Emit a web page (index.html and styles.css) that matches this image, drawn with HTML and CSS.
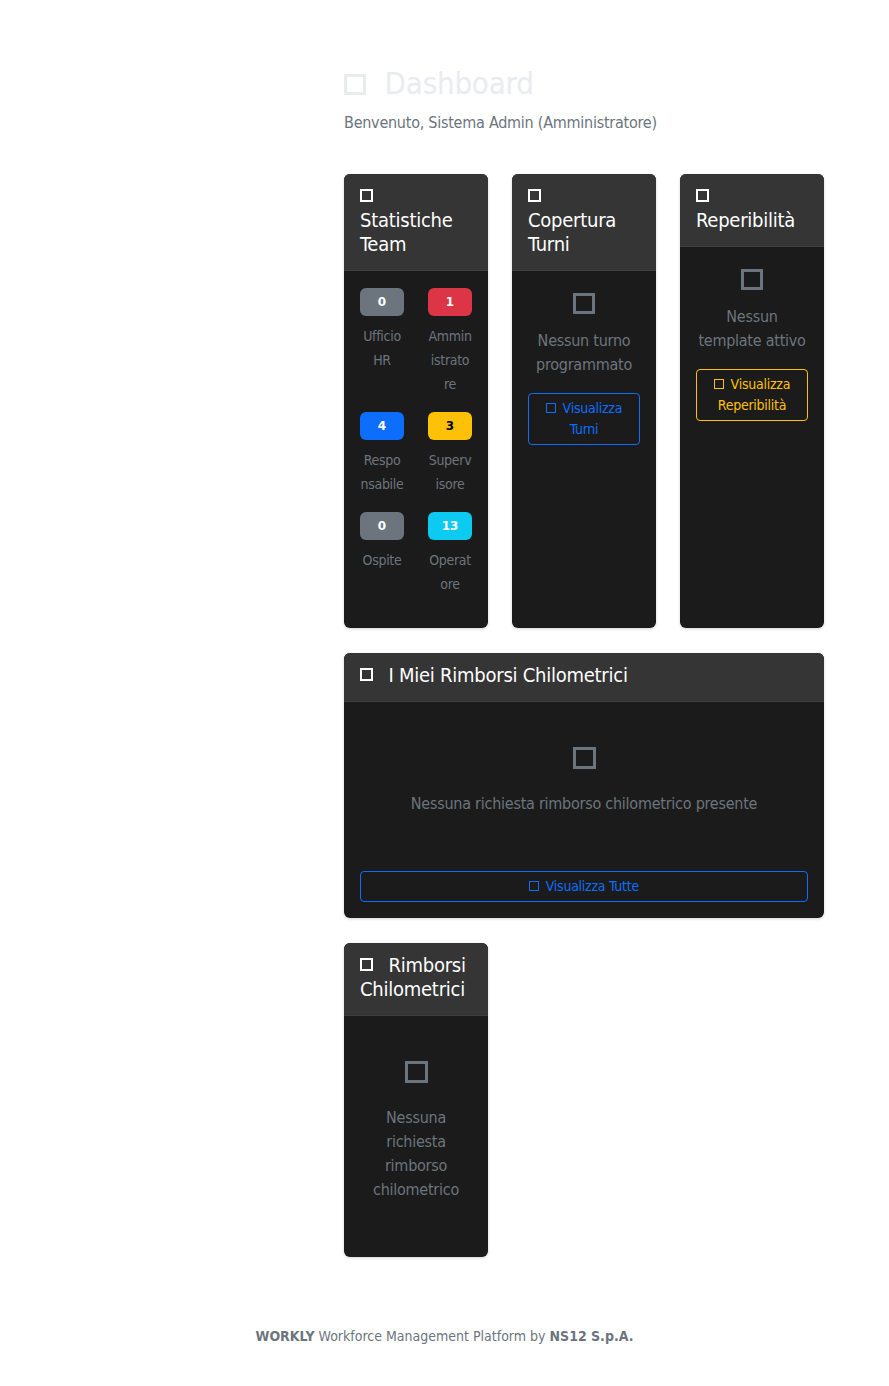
FILE: index.html
```html
<!DOCTYPE html>
<html lang="it">
<head>
<meta charset="utf-8">
<title>Dashboard - WORKLY</title>
<link rel="stylesheet" href="styles.css">
</head>
<body>
<div class="layout">
  <aside class="sidebar"></aside>
  <main class="main">
    <div class="content">
      <h1 class="page-title"><span class="ico ico-title"></span> Dashboard</h1>
      <p class="welcome">Benvenuto, Sistema Admin (Amministratore)</p>

      <div class="row-3">
        <div class="card">
          <div class="card-header"><h5 class="card-title"><span class="ico ico-head"></span> Statistiche Team</h5></div>
          <div class="card-body stats">
            <div class="stat"><span class="badge bg-secondary">0</span><small class="stat-label">Ufficio<br>HR</small></div>
            <div class="stat"><span class="badge bg-danger">1</span><small class="stat-label">Ammin<br>istrato<br>re</small></div>
            <div class="stat"><span class="badge bg-primary">4</span><small class="stat-label">Respo<br>nsabile</small></div>
            <div class="stat"><span class="badge bg-warning">3</span><small class="stat-label">Superv<br>isore</small></div>
            <div class="stat"><span class="badge bg-secondary">0</span><small class="stat-label">Ospite</small></div>
            <div class="stat"><span class="badge bg-info">13</span><small class="stat-label">Operat<br>ore</small></div>
          </div>
        </div>

        <div class="card">
          <div class="card-header"><h5 class="card-title"><span class="ico ico-head"></span> Copertura Turni</h5></div>
          <div class="card-body empty">
            <div class="empty-icon"><span class="ico ico-empty"></span></div>
            <p class="empty-text">Nessun turno programmato</p>
            <a class="btn btn-blue" href="#"><span class="ico ico-btn"></span> Visualizza Turni</a>
          </div>
        </div>

        <div class="card">
          <div class="card-header"><h5 class="card-title"><span class="ico ico-head"></span> Reperibilità</h5></div>
          <div class="card-body empty">
            <div class="empty-icon"><span class="ico ico-empty"></span></div>
            <p class="empty-text">Nessun template attivo</p>
            <a class="btn btn-yellow" href="#"><span class="ico ico-btn"></span> Visualizza Reperibilità</a>
          </div>
        </div>
      </div>

      <div class="card card-wide">
        <div class="card-header"><h5 class="card-title"><span class="ico ico-head"></span> I Miei Rimborsi Chilometrici</h5></div>
        <div class="card-body">
          <div class="empty-block">
            <div class="empty-icon big"><span class="ico ico-empty ico-lg"></span></div>
            <p class="empty-text">Nessuna richiesta rimborso chilometrico presente</p>
          </div>
          <a class="btn btn-blue btn-wide" href="#"><span class="ico ico-btn"></span> Visualizza Tutte</a>
        </div>
      </div>

      <div class="row-3">
        <div class="card">
          <div class="card-header"><h5 class="card-title"><span class="ico ico-head"></span> Rimborsi Chilometrici</h5></div>
          <div class="card-body">
            <div class="empty-block">
              <div class="empty-icon big"><span class="ico ico-empty ico-lg"></span></div>
              <p class="empty-text">Nessuna richiesta rimborso chilometrico</p>
            </div>
          </div>
        </div>
      </div>
    </div>
  </main>
</div>
<footer class="footer">
  <strong>WORKLY</strong> Workforce Management Platform by <strong>NS12 S.p.A.</strong>
</footer>
</body>
</html>
```

FILE: styles.css
```css
* { box-sizing: border-box; }

html, body {
  margin: 0;
  padding: 0;
  background: #ffffff;
}

body {
  font-family: "DejaVu Sans Condensed", "DejaVu Sans", sans-serif;
  font-stretch: condensed;
  font-size: 16px;
  line-height: 24px;
  letter-spacing: -0.25px;
  color: #212529;
}

.layout {
  display: flex;
}

.sidebar {
  width: 320px;
  flex: none;
}

.main {
  flex: 1;
  padding: 65px 24px 0 24px;
}

.content {
  width: 480px;
}

.page-title {
  margin: 0 0 10px 0;
  font-size: 31px;
  line-height: 36px;
  font-weight: 400;
  color: #e9ecef;
}

.welcome {
  margin: 0 0 39px 0;
  color: #6c757d;
  font-size: 16px;
  line-height: 24px;
}

.ico {
  display: inline-block;
  border-style: solid;
  border-color: currentColor;
}

.ico-title {
  width: 22px;
  height: 21px;
  border-width: 3px;
  vertical-align: -1px;
  margin-right: 10px;
  color: #e9ecef;
}

.ico-head {
  width: 13px;
  height: 13px;
  border-width: 2px;
  vertical-align: 1px;
  margin-right: 10px;
}

.ico-btn {
  width: 10px;
  height: 10px;
  border-width: 1.5px;
  vertical-align: 0px;
  margin-right: 3px;
}

.ico-empty {
  width: 22px;
  height: 21px;
  border-width: 3px;
  color: #6c757d;
}

.ico-lg {
  width: 23px;
  height: 22px;
}

.row-3 {
  display: grid;
  grid-template-columns: repeat(3, 1fr);
  column-gap: 24px;
  margin-bottom: 25px;
}

.card {
  display: flex;
  flex-direction: column;
  border-radius: 6px;
  overflow: hidden;
  background: #1b1b1b;
  box-shadow: 0 1px 3px rgba(0, 0, 0, 0.18);
}

.card-wide {
  margin-bottom: 25px;
}

.card-header {
  background: #353535;
  padding: 10px 16px 14px 16px;
  border-bottom: 1px solid #3e3e3e;
}

.card-title {
  margin: 0;
  font-size: 20px;
  line-height: 24px;
  font-weight: 400;
  color: #ffffff;
}

.card-body {
  flex: 1;
  padding: 16px;
}

.stats {
  display: grid;
  grid-template-columns: 1fr 1fr;
  column-gap: 24px;
  row-gap: 16px;
  align-content: start;
  padding-top: 17px;
  padding-bottom: 32px;
}

.stat {
  text-align: center;
}

.badge {
  display: block;
  height: 28px;
  padding: 8px 0;
  border-radius: 6px;
  font-size: 12px;
  line-height: 12px;
  font-weight: 700;
  letter-spacing: 0;
  color: #ffffff;
  margin-bottom: 8px;
  font-family: "DejaVu Sans", sans-serif;
  font-stretch: normal;
}

.bg-secondary { background: #6c757d; }
.bg-danger { background: #dc3545; }
.bg-primary { background: #0d6efd; }
.bg-warning { background: #ffc107; color: #000000; }
.bg-info { background: #0dcaf0; }

.stat-label {
  display: block;
  font-size: 14px;
  line-height: 24px;
  letter-spacing: -0.3px;
  color: #6c757d;
  white-space: nowrap;
}

.empty {
  text-align: center;
}

.empty-icon {
  height: 32px;
  display: flex;
  align-items: center;
  justify-content: center;
  margin-bottom: 10px;
}

.empty-icon.big {
  margin-bottom: 18px;
}

.empty-text {
  margin: 0 0 16px 0;
  color: #6c757d;
  font-size: 16px;
  line-height: 24px;
  text-align: center;
}

.empty-block {
  padding: 24px 0 23px 0;
  text-align: center;
}

.btn {
  display: block;
  text-align: center;
  text-decoration: none;
  background: transparent;
  border: 1px solid;
  border-radius: 4px;
  padding: 4px 8px;
  font-size: 14px;
  line-height: 21px;
}

.btn-blue {
  color: #0d6efd;
  border-color: #0d6efd;
}

.btn-yellow {
  color: #ffc107;
  border-color: #ffc107;
}

.btn-wide {
  margin-top: 16px;
}

.footer {
  margin-top: 44px;
  padding-bottom: 40px;
  text-align: center;
  font-size: 14px;
  line-height: 21px;
  letter-spacing: 0;
  color: #6c757d;
}

.footer strong {
  font-weight: 700;
}
```
